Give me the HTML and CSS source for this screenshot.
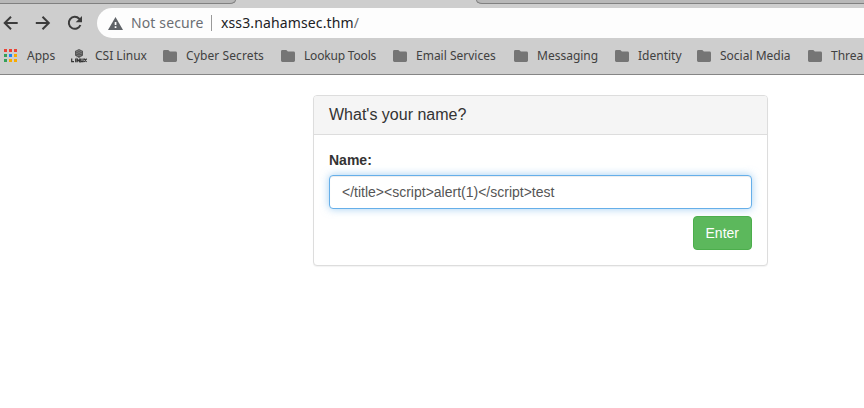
FILE: index.html
```html
<!DOCTYPE html>
<html lang="en">
<head>
<meta charset="utf-8">
<title>Name form</title>
<link rel="stylesheet" href="styles.css">
</head>
<body>
<svg class="symbols" aria-hidden="true">
  <symbol id="folder" viewBox="0 0 14 12"><path d="M1.4 0h3.9L6.900 1.500h5.700A1.400 1.400 0 0 1 14 2.900v7.700a1.400 1.400 0 0 1-1.400 1.400H1.400A1.400 1.400 0 0 1 0 10.600V1.400A1.400 1.400 0 0 1 1.400 0z"/></symbol>
</svg>
<header class="browser">
  <div class="tabs"><div class="tab tab-left"></div><div class="tab-active"></div><div class="tab tab-right"></div></div>
  <div class="toolbar">
    <svg class="nav" viewBox="0 0 16 16"><path d="M14.700 8H2M8 1.700 1.700 8 8 14.300"/></svg>
    <svg class="nav" viewBox="0 0 16 16"><path d="M.8 8H14M7.500 1.700 13.800 8l-6.300 6.300"/></svg>
    <svg class="nav" viewBox="0 0 16 16"><path d="M13.4 10A6 6 0 1 1 12.2 3.7L13 4.6"/><path class="solid" d="M15 1v6.3H8.7z"/></svg>
    <div class="address">
      <svg class="warning" viewBox="0 0 15 13"><path d="M7.5 0 15 13H0z"/><path class="mark" d="M6.700 5h1.700v3H6.700zM6.700 9.300h1.700V11H6.700z"/></svg>
      <span class="security">Not secure</span>
      <span class="divider"></span>
      <span class="url">xss3.nahamsec.thm<span class="slash">/</span></span>
    </div>
  </div>
  <nav class="bookmarks">
    <div class="bookmark"><svg class="grid-icon" viewBox="0 0 13 13"><path fill="#ea4335" d="M0 0h3v3H0zM5 0h3v3H5zM10 0h3v3h-3z"/><path fill="#34a05a" d="M0 5h3v3H0zM0 10h3v3H0z"/><path fill="#1a82f7" d="M5 5h3v3H5z"/><path fill="#f9ab00" d="M10 5h3v3h-3zM5 10h3v3H5zM10 10h3v3h-3z"/></svg>Apps</div>
    <div class="bookmark"><svg class="csi" viewBox="0 0 16 14"><path d="m8 0 4 2v4.5L8 9 4 6.500V2z"/><path class="lines" d="m5 3 3-1.500L11 3M5 5l3-1.500L11 5M6 7l2-1 2 1"/><path class="strokes" d="M.7 9.500v3.200h2.300M4.700 9.500v3.700M6.200 13.200V10l2.500 2.700V9.500M10 9.500v3.200h2V9.500M13 9.700l2.600 3.200M15.600 9.700 13 12.900"/></svg>CSI Linux</div>
    <div class="bookmark wide"><svg class="folder"><use href="#folder"/></svg>Cyber Secrets</div>
    <div class="bookmark tight"><svg class="folder"><use href="#folder"/></svg>Lookup Tools</div>
    <div class="bookmark"><svg class="folder"><use href="#folder"/></svg>Email Services</div>
    <div class="bookmark"><svg class="folder"><use href="#folder"/></svg>Messaging</div>
    <div class="bookmark"><svg class="folder"><use href="#folder"/></svg>Identity</div>
    <div class="bookmark"><svg class="folder"><use href="#folder"/></svg>Social Media</div>
    <div class="bookmark"><svg class="folder"><use href="#folder"/></svg>Threa</div>
  </nav>
</header>
<main>
  <section class="panel">
    <h1 class="panel-heading">What's your name?</h1>
    <form class="panel-body">
      <label for="name">Name:</label>
      <input id="name" type="text" value="&lt;/title&gt;&lt;script&gt;alert(1)&lt;/script&gt;test">
      <button type="button">Enter</button>
    </form>
  </section>
</main>
</body>
</html>
```
FILE: styles.css
```css
* { box-sizing: border-box; }
body { margin: 0; height: 408px; overflow: hidden; background: #fff; color: #333; font: 14px/20px "Liberation Sans", sans-serif; }
.symbols { display: none; }
.browser { height: 75px; background: #cecece; border-bottom: 1px solid #858585; font-family: "Noto Sans", sans-serif; overflow: hidden; }
.tabs { display: flex; height: 8px; }
.tab { height: 4px; background: #b8b8b8; border-bottom: 1px solid #808080; }
.tab-left { width: 236px; border-bottom-right-radius: 6px 4px; border-right: 1px solid #808080; }
.tab-active { width: 240px; }
.tab-right { flex: 1; border-bottom-left-radius: 6px 4px; border-left: 1px solid #808080; }
.toolbar { display: flex; align-items: center; height: 30px; padding-left: 3px; }
.nav { width: 16px; height: 16px; margin-right: 16px; fill: none; stroke: #3c3c3c; stroke-width: 2; flex: none; }
.nav .solid { fill: #3c3c3c; stroke: none; }
.address { display: flex; align-items: center; flex: 1; height: 30px; margin-left: -2px; padding-left: 11px; border-radius: 15px 0 0 15px; background: #fdfdfd; font-size: 14px; }
.warning { width: 15px; height: 13px; fill: #5f6368; }
.warning .mark { fill: #fff; }
.security { width: 80px; margin-left: 8px; color: #6b6e73; letter-spacing: .13px; white-space: nowrap; }
.divider { width: 1px; height: 16px; background: #999; }
.url { margin-left: 9px; color: #202124; letter-spacing: .13px; }
.slash { color: #6b6e73; }
.bookmarks { display: grid; grid-template-columns: 68px 92px 118px 112px 121px 101px 82px 111px 56px; height: 36px; padding-left: 3px; font-size: 12px; color: #414141; }
.bookmark { display: flex; align-items: center; white-space: nowrap; }
.wide { letter-spacing: .1px; }
.tight { letter-spacing: -.18px; }
.folder { width: 14px; height: 12px; margin-right: 9px; fill: #757575; }
.grid-icon { width: 13px; height: 13px; margin: 0 10px 1px 1px; }
.csi { width: 16px; height: 14px; margin-right: 8px; fill: #555; }
.csi .lines { fill: none; stroke: #999; stroke-width: .6; }
.csi .strokes { fill: none; stroke: #333; stroke-width: 1.2; }
main { padding-top: 20px; }
.panel { width: 455px; height: 171px; margin-left: 313px; border: 1px solid #ddd; border-radius: 4px; box-shadow: 0 1px 1px rgba(0,0,0,.05); background: #fff; }
.panel-heading { height: 39px; margin: 0; padding: 10px 15px; border-bottom: 1px solid #ddd; border-radius: 3px 3px 0 0; background: #f5f5f5; font-size: 16px; font-weight: 400; line-height: 18px; }
.panel-body { display: flex; flex-direction: column; padding: 15px; }
label { margin-bottom: 5px; font-weight: 700; }
input { width: 100%; height: 34px; padding: 6px 12px; border: 1px solid #66afe9; border-radius: 4px; outline: 0; background: #fff; box-shadow: inset 0 1px 1px rgba(0,0,0,.075), 0 0 8px rgba(102,175,233,.6); color: #555; font: inherit; }
button { align-self: flex-end; height: 34px; margin-top: 7px; padding: 6px 12px; border: 1px solid #4cae4c; border-radius: 4px; background: #5cb85c; color: #fff; font: inherit; }
```
